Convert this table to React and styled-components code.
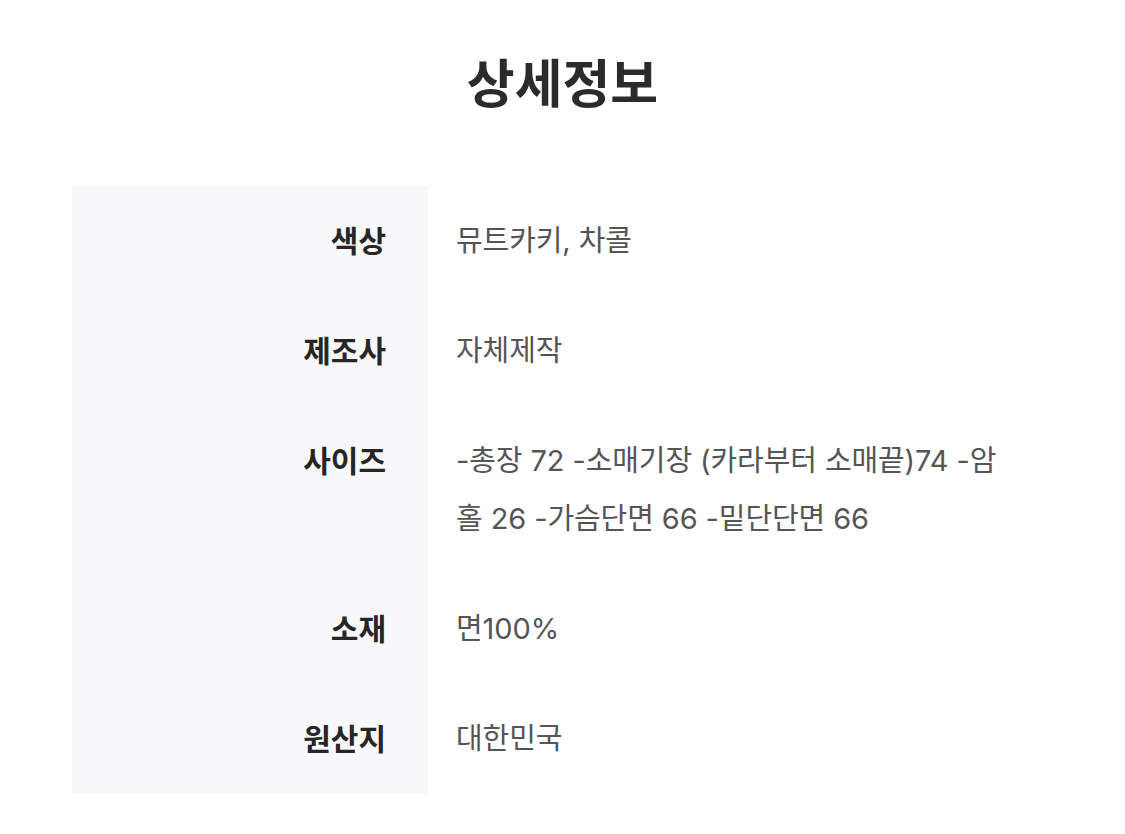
import React from "react";
import styled, { createGlobalStyle } from "styled-components";

const Global = createGlobalStyle`
  html, body { margin: 0; padding: 0; background: #ffffff; }
  body { font-family: Inter, "Noto Sans CJK KR", sans-serif; }
`;

const Page = styled.main`
  width: 1125px;
  box-sizing: border-box;
  padding: 49px 72px 0 72px;
  display: flex;
  flex-direction: column;
  align-items: stretch;
`;

const Title = styled.h2`
  margin: 0;
  height: 72px;
  line-height: 72px;
  text-align: center;
  font-size: 52px;
  font-weight: 700;
  color: #2b2b2b;
  letter-spacing: 0;
`;

const Table = styled.div`
  margin-top: 65px;
  display: grid;
  grid-template-columns: 356px 1fr;
  width: 981px;
`;

const Label = styled.div`
  background: #f8f8fa;
  text-align: right;
  padding: 26px 42px 26px 0;
  font-size: 30px;
  font-weight: 700;
  line-height: 58px;
  color: #262626;
  letter-spacing: 0;
`;

const Value = styled.div`
  padding: 26px 40px 26px 28px;
  font-size: 29px;
  line-height: 58px;
  color: #555555;
  letter-spacing: -0.1px;
  word-break: normal;
`;

const rows = [
  ["색상", "뮤트카키, 차콜"],
  ["제조사", "자체제작"],
  ["사이즈", "-총장 72 -소매기장 (카라부터 소매끝)74 -암홀 26 -가슴단면 66 -밑단단면 66"],
  ["소재", "면100%"],
  ["원산지", "대한민국"],
];

export default function App() {
  return (
    <>
      <Global />
      <Page>
        <Title>상세정보</Title>
        <Table>
          {rows.map(([k, v]) => (
            <React.Fragment key={k}>
              <Label>{k}</Label>
              <Value>{v}</Value>
            </React.Fragment>
          ))}
        </Table>
      </Page>
    </>
  );
}
